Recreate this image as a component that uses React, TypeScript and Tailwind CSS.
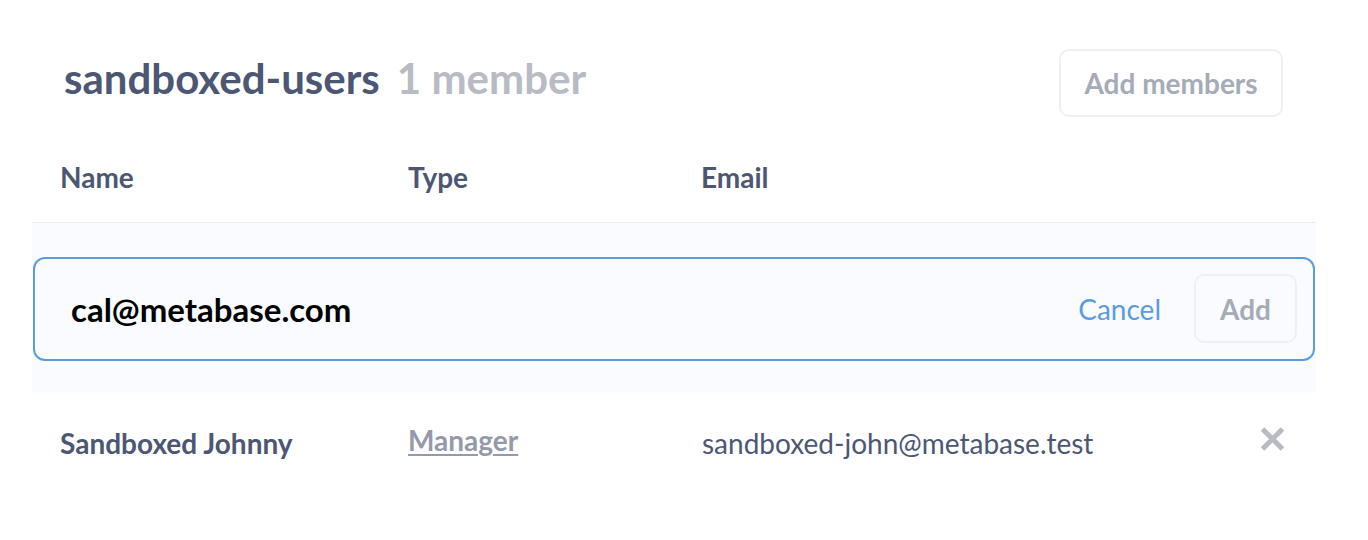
import React from 'react';

const members = [
  { name: 'Sandboxed Johnny', type: 'Manager', email: 'sandboxed-john@metabase.test' },
];

export default function App() {
  return (
    <div className="w-[1368px] h-[540px] bg-white pl-8 pr-[52px] font-['Lato',sans-serif] text-[#4c5773] overflow-hidden">
      {/* Header */}
      <div className="flex items-start justify-between pl-8 pr-[33px] pt-[49px]">
        <h2 className="mt-[4px] text-[42px] leading-[1.2] font-bold flex items-baseline gap-[17px]">
          <span>sandboxed-users</span>
          <span className="text-[#b8bbc3]">1 member</span>
        </h2>
        <button className="h-[68px] w-[224px] rounded-[10px] border-2 border-[#f0f0f0] bg-white text-[28px] font-bold text-[#a6abb8]">
          Add members
        </button>
      </div>

      {/* Table head */}
      <div className="grid grid-cols-[376px_294px_1fr] pt-[44px] pb-[27px] border-b border-[#edeef0] text-[28px] leading-[1.2] font-bold">
        <div className="pl-[28px]">Name</div>
        <div>Type</div>
        <div className="-ml-px">Email</div>
      </div>

      {/* Add member input */}
      <div className="bg-[#f9fbfe] pt-[34px] pb-[32px]">
        <div className="mx-px h-[104px] flex items-center rounded-[12px] border-2 border-[#5b9ce1] bg-[#f9fbfe] pl-[36px] pr-4">
          <span className="flex-1 pt-[3px] text-[33px] leading-[1.2] font-bold text-black">cal@metabase.com</span>
          <button className="text-[28px] text-[#5b9ce1] mr-[33px]">Cancel</button>
          <button className="h-[69px] w-[103px] rounded-[10px] border-2 border-[#f0f0f0] text-[28px] font-bold text-[#a6abb8]">
            Add
          </button>
        </div>
      </div>

      {/* Rows */}
      {members.map((m) => (
        <div key={m.email} className="grid grid-cols-[376px_294px_1fr] pt-[34px] text-[28px] leading-[1.2]">
          <div className="pl-[28px] font-bold">{m.name}</div>
          <div className="-mt-[3px]">
            <span className="font-bold text-[#949aab] underline decoration-2 underline-offset-[3px]">{m.type}</span>
          </div>
          <div className="flex items-start justify-between pr-[31px]">
            <span>{m.email}</span>
            <svg width="25" height="24" viewBox="0 0 25 24">
              <path d="M2.5 2 L22.5 22 M22.5 2 L2.5 22" stroke="#b8bbc3" strokeWidth="5" />
            </svg>
          </div>
        </div>
      ))}
    </div>
  );
}
